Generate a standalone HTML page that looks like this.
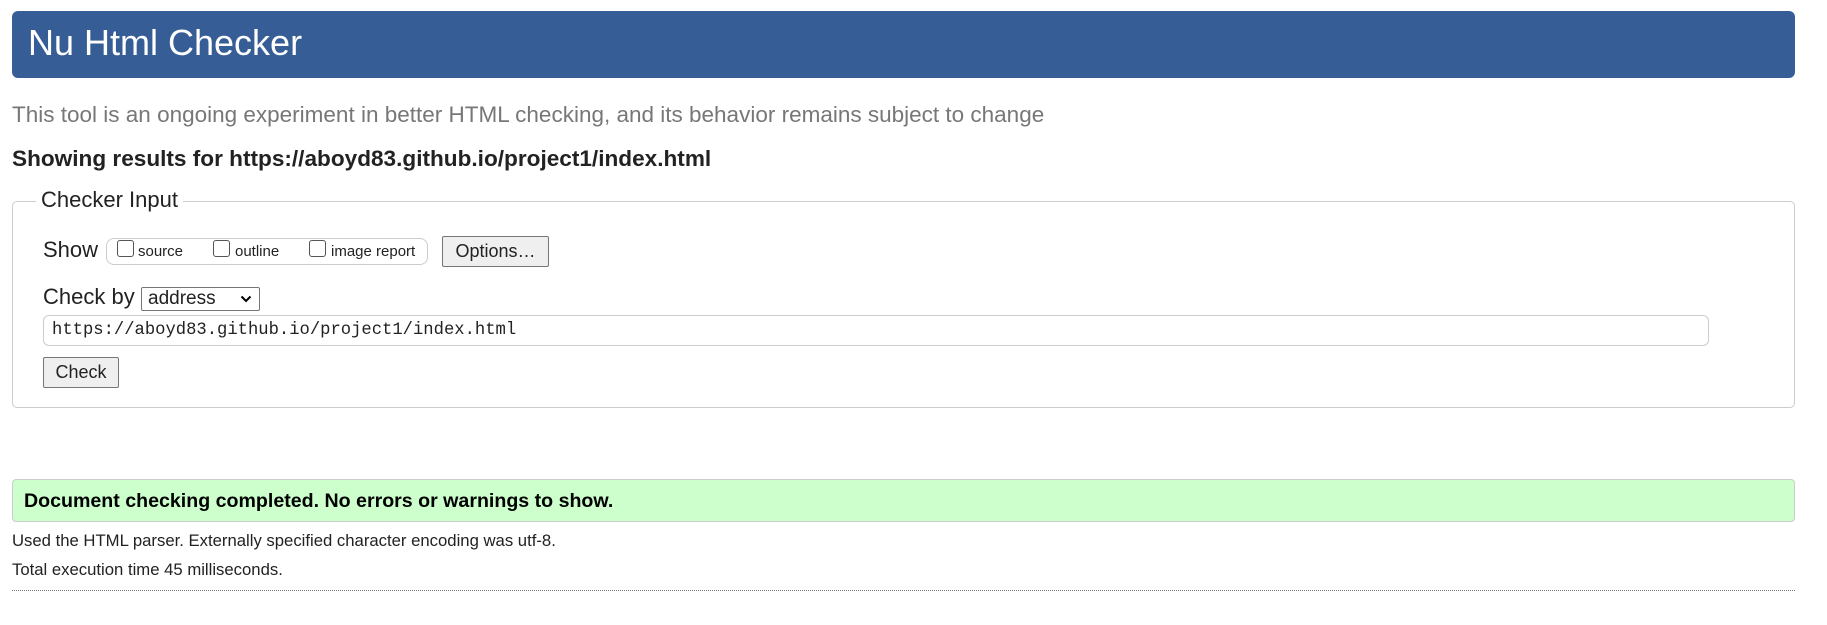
<!DOCTYPE html>
<html><head><meta charset="utf-8">
<style>
*{box-sizing:border-box;margin:0;padding:0}
body{width:1827px;height:625px;background:#fff;font-family:"Liberation Sans",Arial,sans-serif;color:#222;position:relative;overflow:hidden}
.a{position:absolute;white-space:nowrap}
.cb{position:absolute;width:17px;height:17px;border:1px solid #555;border-radius:3px;background:#fff}
</style></head><body>
<div class="a" style="left:12px;top:11px;width:1783px;height:67px;background:#365d95;border-radius:6px"></div>
<div class="a" style="left:28px;top:22px;font-size:36px;line-height:42px;color:#fff">Nu Html Checker</div>
<div class="a" style="left:12px;top:102px;font-size:22.5px;line-height:26px;color:#777">This tool is an ongoing experiment in better HTML checking, and its behavior remains subject to change</div>
<div class="a" style="left:12px;top:146px;font-size:22.6px;line-height:25px;font-weight:bold;color:#222">Showing results for https://aboyd83.github.io/project1/index.html</div>

<div class="a" style="left:12px;top:201px;width:1783px;height:207px;border:1px solid #ccc;border-radius:5px"></div>
<div class="a" style="left:36px;top:187px;padding:0 5px;background:#fff;font-size:22px;line-height:25px;color:#222">Checker Input</div>

<div class="a" style="left:43px;top:237px;font-size:22px;line-height:25px">Show</div>
<div class="a" style="left:106px;top:238px;width:322px;height:27px;border:1px solid #ccc;border-radius:8px"></div>
<div class="cb" style="left:117px;top:240px"></div>
<div class="a" style="left:138px;top:243px;font-size:15px;line-height:18px">source</div>
<div class="cb" style="left:213px;top:240px"></div>
<div class="a" style="left:235px;top:243px;font-size:15px;line-height:18px">outline</div>
<div class="cb" style="left:309px;top:240px"></div>
<div class="a" style="left:331px;top:243px;font-size:15px;line-height:18px">image report</div>
<div class="a" style="left:442px;top:236px;width:107px;height:31px;border:1px solid #767676;border-radius:2px;background:#efefef;font-size:18px;line-height:29px;text-align:center">Options…</div>

<div class="a" style="left:43px;top:284px;font-size:22px;line-height:25px">Check by</div>
<div class="a" style="left:141px;top:287px;width:119px;height:24px;border:1px solid #767676;border-radius:2px;background:#fff;font-size:19px;line-height:22px;padding-left:6px">address</div>
<svg class="a" style="left:240px;top:294px" width="12" height="10" viewBox="0 0 12 10"><path d="M1.5 2.5 L6 7 L10.5 2.5" fill="none" stroke="#000" stroke-width="2"/></svg>

<div class="a" style="left:43px;top:315px;width:1666px;height:31px;border:1px solid #ccc;border-radius:6px"></div>
<div class="a" style="left:52px;top:321px;font-family:'Liberation Mono',monospace;font-size:17.2px;line-height:20px">https://aboyd83.github.io/project1/index.html</div>
<div class="a" style="left:43px;top:357px;width:76px;height:31px;border:1px solid #767676;border-radius:2px;background:#efefef;font-size:18px;line-height:29px;text-align:center">Check</div>

<div class="a" style="left:12px;top:479px;width:1783px;height:43px;background:#ccffcc;border:1px solid #ccc;border-radius:4px"></div>
<div class="a" style="left:24px;top:490px;font-size:19.6px;line-height:23px;font-weight:bold;color:#000">Document checking completed. No errors or warnings to show.</div>
<div class="a" style="left:12px;top:531px;font-size:16.7px;line-height:19px">Used the HTML parser. Externally specified character encoding was utf-8.</div>
<div class="a" style="left:12px;top:560px;font-size:16.7px;line-height:19px">Total execution time 45 milliseconds.</div>
<div class="a" style="left:12px;top:590px;width:1783px;border-top:1px dotted #777"></div>
</body></html>
